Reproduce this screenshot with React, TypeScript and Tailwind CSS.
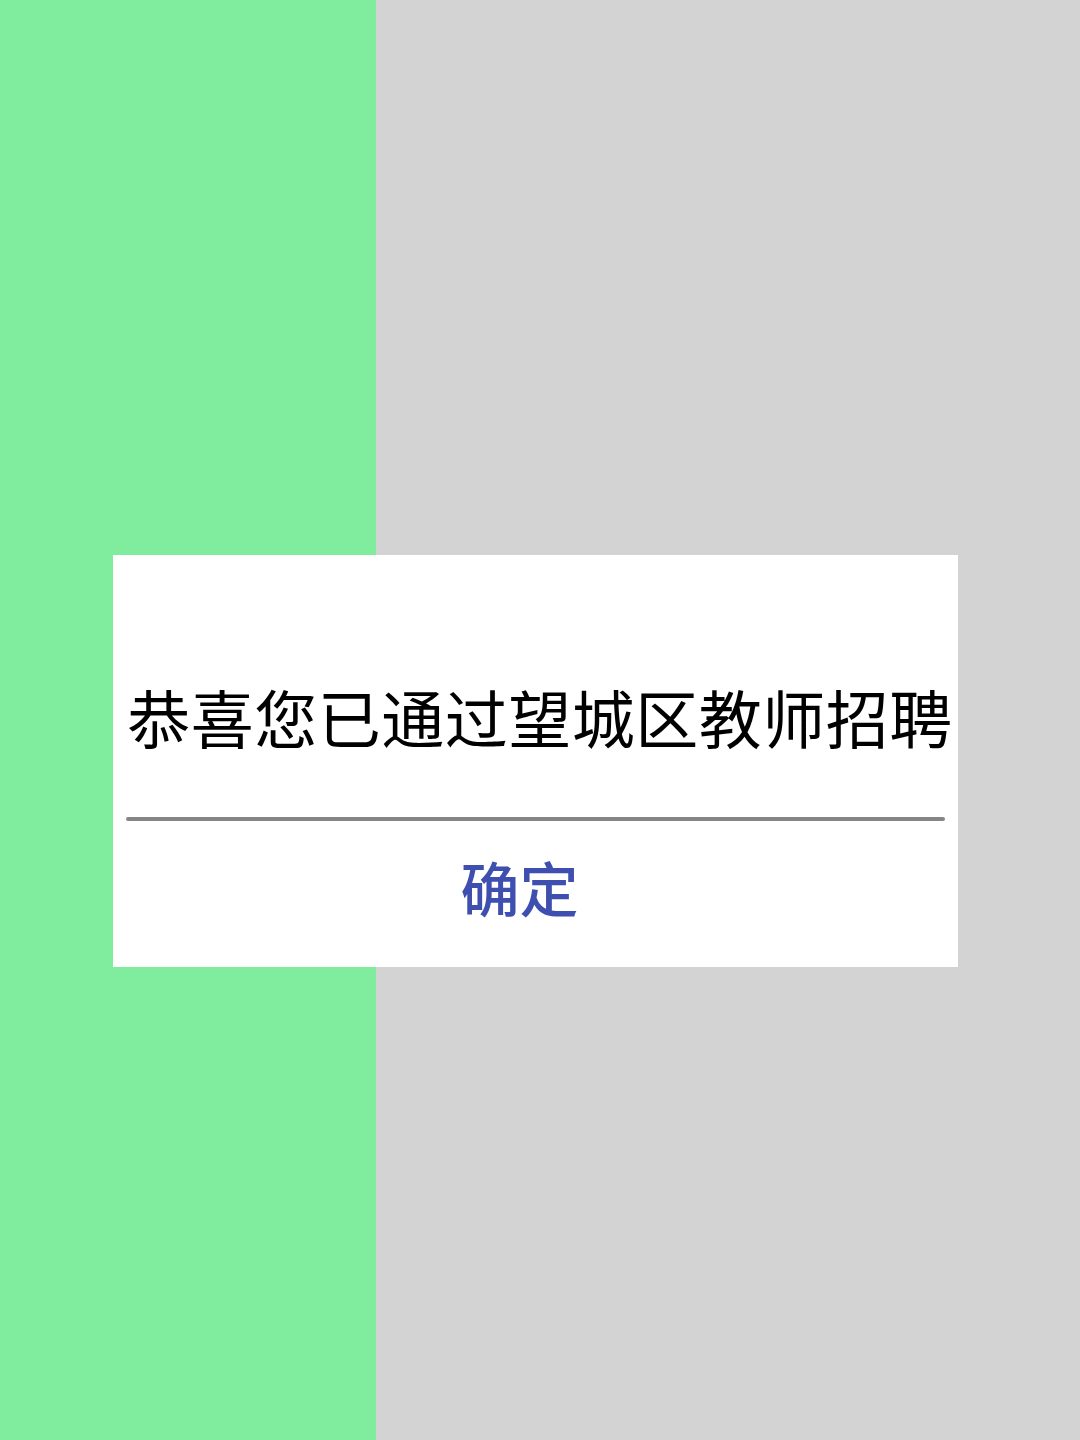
export default function App() {
  return (
    <div
      className="relative flex h-[1440px] w-[1080px] overflow-hidden"
      style={{ fontFamily: '"Noto Sans CJK SC", "Noto Sans", sans-serif' }}
    >
      <div className="h-full w-[376px] bg-[#80ec9d]" />
      <div className="h-full flex-1 bg-[#d3d3d3]" />

      <div className="absolute left-[113px] top-[555px] flex w-[845px] flex-col bg-white pb-[51px] pt-[129px]">
        <div className="whitespace-nowrap pl-[9px] text-center text-[63px] leading-[63px] tracking-[0.5px] text-black">
          恭喜您已通过望城区教师招聘
        </div>
        <div className="mx-[13px] mt-[70px] h-[4px] rounded-full bg-[#858585]" />
        <button
          type="button"
          className="mt-[36px] self-center pr-[32px] text-[59px] font-medium leading-[59px] text-[#3f4fb0]"
        >
          确定
        </button>
      </div>
    </div>
  );
}
